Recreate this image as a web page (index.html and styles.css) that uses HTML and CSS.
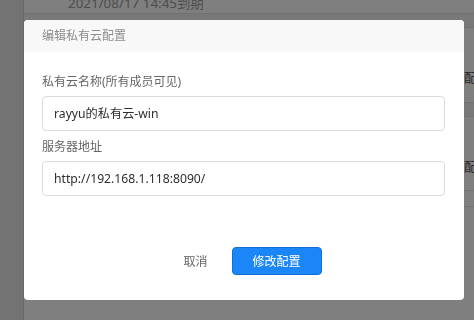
FILE: index.html
```html
<!DOCTYPE html>
<html lang="zh-CN">
<head>
<meta charset="utf-8">
<title>编辑私有云配置</title>
<link rel="stylesheet" href="styles.css">
</head>
<body>
<div class="page">
  <aside class="sidebar"></aside>
  <main class="main">
    <div class="expire">2021/08/17 14:45到期</div>
    <div class="card">
      <div class="card-head"></div>
      <div class="card-body"><span class="action">配置</span></div>
    </div>
    <div class="card">
      <div class="card-head"></div>
      <div class="card-body"><span class="action">配置</span></div>
    </div>
    <div class="card-foot"></div>
  </main>
</div>
<div class="mask"></div>
<div class="modal">
  <div class="modal-head">编辑私有云配置</div>
  <div class="modal-body">
    <label class="label">私有云名称(所有成员可见)</label>
    <div class="input">rayyu的私有云-win</div>
    <label class="label">服务器地址</label>
    <div class="input">http://192.168.1.118:8090/</div>
  </div>
  <div class="modal-foot">
    <span class="btn-cancel">取消</span>
    <span class="btn-primary">修改配置</span>
  </div>
</div>
</body>
</html>
```
FILE: styles.css
```css
html, body {
  margin: 0;
  padding: 0;
  width: 474px;
  height: 320px;
  overflow: hidden;
  font-family: "Noto Sans", "Noto Sans CJK SC", sans-serif;
  font-size: 13px;
}
.page {
  display: flex;
  height: 320px;
  background: #fff;
}
.sidebar {
  width: 24px;
  background: #e7e7e7;
  border-right: 1px solid #d0d0d0;
  box-sizing: border-box;
}
.main {
  flex: 1;
  display: flex;
  flex-direction: column;
  background: #fff;
}
.expire {
  height: 25px;
  margin-top: -12px;
  padding-left: 44px;
  line-height: 30px;
  color: #9a9a9a;
  font-size: 13.4px;
}
.card-head {
  height: 13px;
  background: #f0f0f0;
  border-top: 1px solid #e2e2e2;
  border-bottom: 1px solid #e2e2e2;
}
.card-body {
  height: 74px;
  box-sizing: border-box;
  padding-top: 22px;
  display: flex;
  align-items: center;
  justify-content: flex-end;
  margin-right: -22px;
}
.card:first-of-type .card-body { height: 73px; }
.action {
  color: #555;
  width: 32px;
  font-size: 13px;
}
.card-foot {
  height: 15px;
  border-top: 1px solid #e2e2e2;
  border-bottom: 1px solid #e2e2e2;
  margin-top: -1px;
}
.mask {
  position: fixed;
  inset: 0;
  background: rgba(0, 0, 0, 0.5);
}
.modal {
  position: absolute;
  left: 24px;
  top: 20px;
  width: 440px;
  height: 280px;
  background: #fff;
  border-radius: 4px;
  overflow: hidden;
  display: flex;
  flex-direction: column;
  font-size: 12px;
}
.modal-head {
  height: 32px;
  background: #f8f8f8;
  color: #8c8c8c;
  padding-left: 18px;
  line-height: 32px;
}
.modal-body {
  display: flex;
  flex-direction: column;
  padding: 17px 19px 0 18px;
}
.label {
  color: #666;
  line-height: 26px;
  height: 22px;
  margin-bottom: 5px;
}
.input {
  height: 35px;
  box-sizing: border-box;
  border: 1px solid #dcdcdc;
  border-radius: 4px;
  padding-left: 11px;
  line-height: 33px;
  color: #2e2e2e;
  font-size: 12.2px;
  margin-bottom: 3px;
}
.modal-foot {
  margin-top: auto;
  display: flex;
  align-items: center;
  justify-content: center;
  gap: 24px;
  padding: 0 0 25px 17px;
}
.btn-cancel {
  color: #666;
}
.btn-primary {
  width: 90px;
  height: 28px;
  box-sizing: border-box;
  background: #1a86f8;
  border: 1px solid #0f6fd6;
  border-radius: 4px;
  color: #fff;
  display: flex;
  align-items: center;
  justify-content: center;
}
```
